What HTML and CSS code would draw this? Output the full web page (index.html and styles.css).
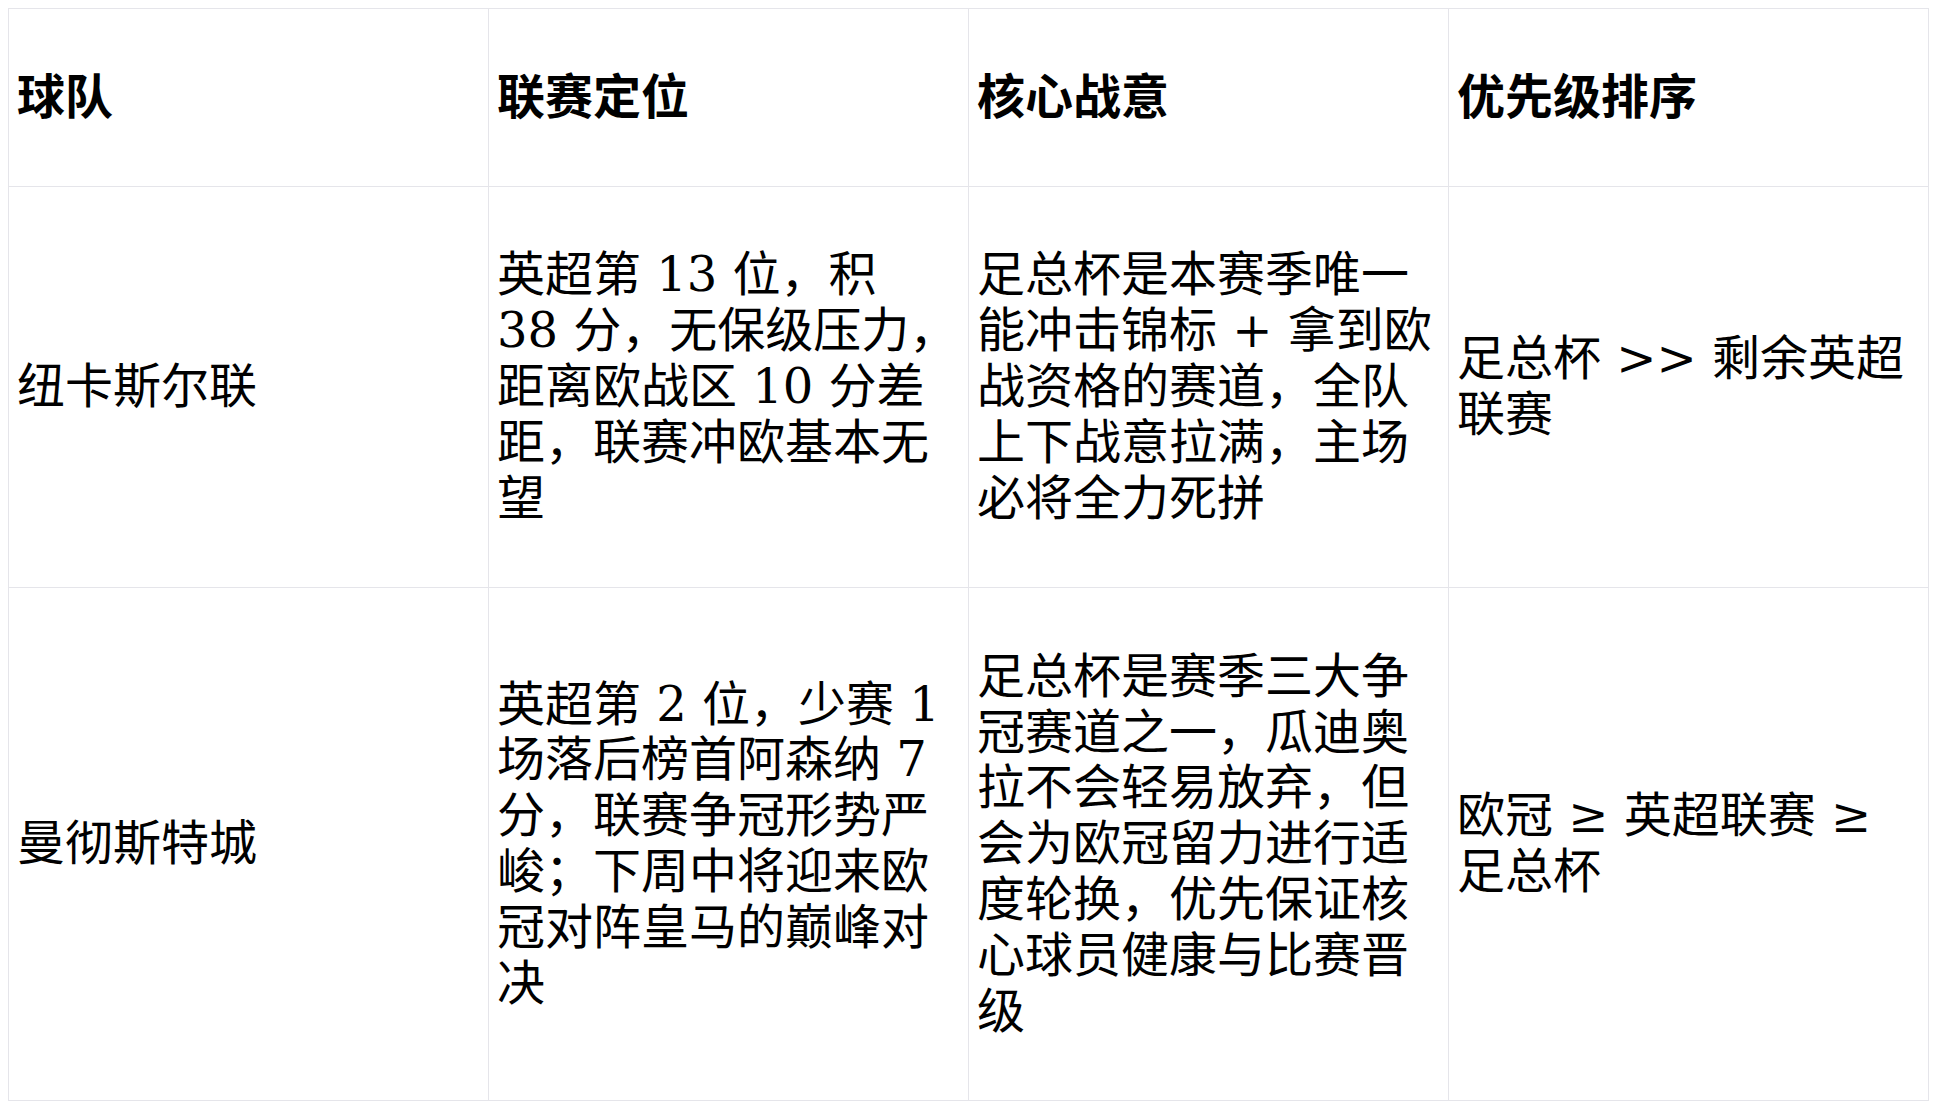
FILE: index.html
```html
<!DOCTYPE html>
<html lang="zh-CN">
<head>
<meta charset="utf-8">
<title>球队战意对比</title>
<link rel="stylesheet" href="styles.css">
</head>
<body>
<table class="compare">
  <thead>
    <tr>
      <th>球队</th>
      <th>联赛定位</th>
      <th>核心战意</th>
      <th>优先级排序</th>
    </tr>
  </thead>
  <tbody>
    <tr>
      <td>纽卡斯尔联</td>
      <td>英超第 13 位，积 <span class="keep">38 分</span>，无保级压力，距离欧战区 10 分差距，联赛冲欧基本无望</td>
      <td>足总杯是本赛季唯一能冲击锦标 + 拿到欧战资格的赛道，全队上下战意拉满，主场必将全力死拼</td>
      <td>足总杯 &gt;&gt; 剩余英超联赛</td>
    </tr>
    <tr>
      <td>曼彻斯特城</td>
      <td>英超第 2 位，少赛 1 场落后榜首阿森纳 7 分，联赛争冠形势严峻；下周中将迎来欧冠对阵皇马的巅峰对决</td>
      <td>足总杯是赛季三大争冠赛道之一，瓜迪奥拉不会轻易放弃，但会为欧冠留力进行适度轮换，优先保证核心球员健康与比赛晋级</td>
      <td>欧冠 ≥ 英超联赛 ≥ 足总杯</td>
    </tr>
  </tbody>
</table>
</body>
</html>
```

FILE: styles.css
```css
html, body {
  background: #ffffff;
}

body {
  margin: 8px;
  font-family: "DejaVu Serif", "Noto Sans CJK SC", serif;
  color: #000000;
}

.compare {
  border-collapse: collapse;
  table-layout: fixed;
  width: 1921px;
  font-size: 48px;
  line-height: 1.164;
}

.compare th,
.compare td {
  border: 1px solid #e5e5ea;
  padding: 60.5px 8px;
  text-align: left;
  vertical-align: middle;
  font-weight: normal;
}

.compare th {
  font-weight: bold;
}

.keep {
  white-space: nowrap;
}
```
